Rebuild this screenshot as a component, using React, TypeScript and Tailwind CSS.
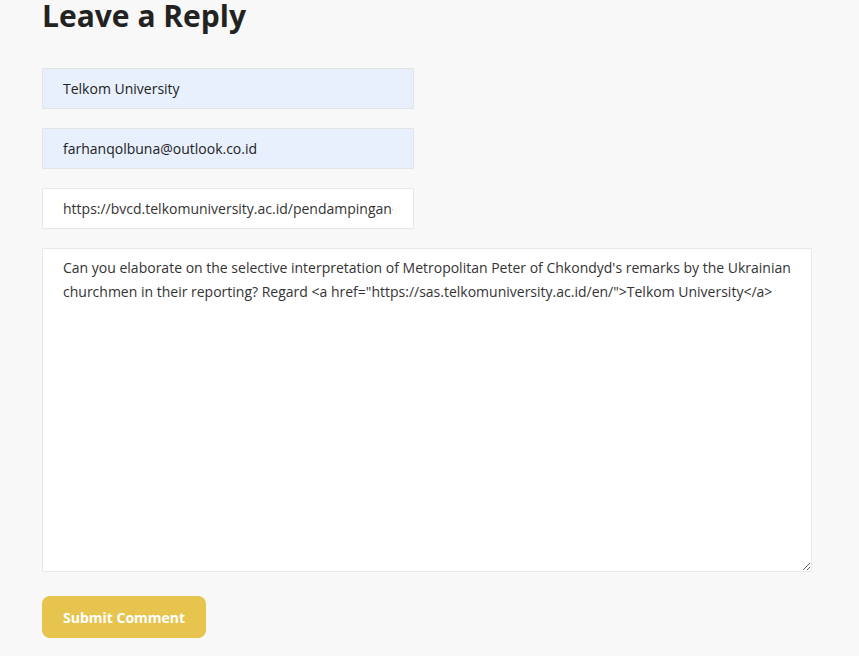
export default function App() {
  const comment =
    "Can you elaborate on the selective interpretation of Metropolitan Peter of Chkondyd's remarks by the Ukrainian churchmen in their reporting? Regard <a href=\"https://sas.telkomuniversity.ac.id/en/\">Telkom University</a>"

  return (
    <div
      className="min-h-[656px] bg-[#f8f8f8] pl-[42px] text-[#333]"
      style={{ fontFamily: "'Open Sans', sans-serif" }}
    >
      <h3 className="text-[30px] font-bold leading-[32px] text-[#222]">Leave a Reply</h3>

      <form className="mt-[36px] flex flex-col gap-[19px]" onSubmit={(e) => e.preventDefault()}>
        <input
          type="text"
          readOnly
          value="Telkom University"
          className="h-[41px] w-[372px] border border-[#e3e3e3] bg-[#e8f0fe] px-[20px] text-[14px] text-[#222] outline-none"
        />
        <input
          type="email"
          readOnly
          value="farhanqolbuna@outlook.co.id"
          className="h-[41px] w-[372px] border border-[#e3e3e3] bg-[#e8f0fe] px-[20px] text-[14px] text-[#222] outline-none"
        />
        <input
          type="url"
          readOnly
          value="https://bvcd.telkomuniversity.ac.id/pendampingan-kuliah-kerja-nyata/"
          className="h-[41px] w-[372px] border border-[#e8e8e8] bg-white px-[20px] text-[14px] text-[#333] outline-none"
        />
        <textarea
          readOnly
          value={comment}
          className="h-[324px] w-[770px] border border-[#e8e8e8] bg-white px-[20px] pt-[7px] text-[14px] leading-[24px] text-[#333] outline-none"
        />
        <div className="pt-[5px]">
          <button
            type="submit"
            className="h-[42px] rounded-[8px] bg-[#e6c44e] px-[21px] text-[14px] font-bold text-white"
          >
            Submit Comment
          </button>
        </div>
      </form>
    </div>
  )
}
